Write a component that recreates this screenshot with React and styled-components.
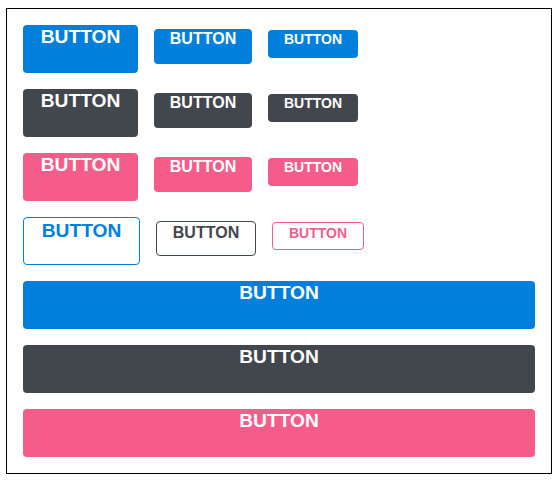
import React from "react";
import styled, { createGlobalStyle, css } from "styled-components";

const colors = {
  primary: "#0080dc",
  dark: "#42464d",
  pink: "#f65c8a",
};

// offset: how far the button sits below the top of its row
const sizes = {
  large: { width: 115, height: 48, font: 19.2, offset: 0 },
  medium: { width: 98, height: 35, font: 16, offset: 4 },
  small: { width: 90, height: 28, font: 14, offset: 5 },
};

const GlobalStyle = createGlobalStyle`
  body {
    margin: 8px 0 0 6px;
    font-family: "Liberation Sans", Arial, sans-serif;
    background: #fff;
  }
`;

const Frame = styled.div`
  width: 546px;
  box-sizing: border-box;
  border: 1px solid #000;
  padding: 16px;
  display: flex;
  flex-direction: column;
  gap: 16px;
`;

const Row = styled.div`
  display: flex;
  align-items: flex-start;
  gap: 16px;
  height: 48px;
`;

const Button = styled.button`
  display: flex;
  align-items: flex-start;
  justify-content: center;
  box-sizing: border-box;
  margin: ${(p) => (p.$block ? 0 : sizes[p.$size].offset)}px 0 0;
  padding: 1px 0 0;
  border: none;
  border-radius: 4px;
  font-family: "Liberation Sans", Arial, sans-serif;
  font-weight: bold;
  line-height: normal;
  cursor: pointer;
  font-size: ${(p) => sizes[p.$size].font}px;
  height: ${(p) => sizes[p.$size].height}px;
  width: ${(p) => (p.$block ? "100%" : `${sizes[p.$size].width}px`)};
  background: ${(p) => colors[p.$color]};
  color: #fff;

  ${(p) =>
    p.$outline &&
    css`
      width: ${sizes[p.$size].width + 2}px;
      padding-top: 2px;
      background: #fff;
      color: ${colors[p.$color]};
      border: 1px solid ${colors[p.$color]};
    `}
`;

const variants = ["primary", "dark", "pink"];

const App = () => (
  <>
    <GlobalStyle />
    <Frame>
      {variants.map((c) => (
        <Row key={c}>
          <Button $color={c} $size="large">BUTTON</Button>
          <Button $color={c} $size="medium">BUTTON</Button>
          <Button $color={c} $size="small">BUTTON</Button>
        </Row>
      ))}
      <Row>
        <Button $outline $color="primary" $size="large">BUTTON</Button>
        <Button $outline $color="dark" $size="medium">BUTTON</Button>
        <Button $outline $color="pink" $size="small">BUTTON</Button>
      </Row>
      {variants.map((c) => (
        <Button key={c} $block $color={c} $size="large">BUTTON</Button>
      ))}
    </Frame>
  </>
);

export default App;
